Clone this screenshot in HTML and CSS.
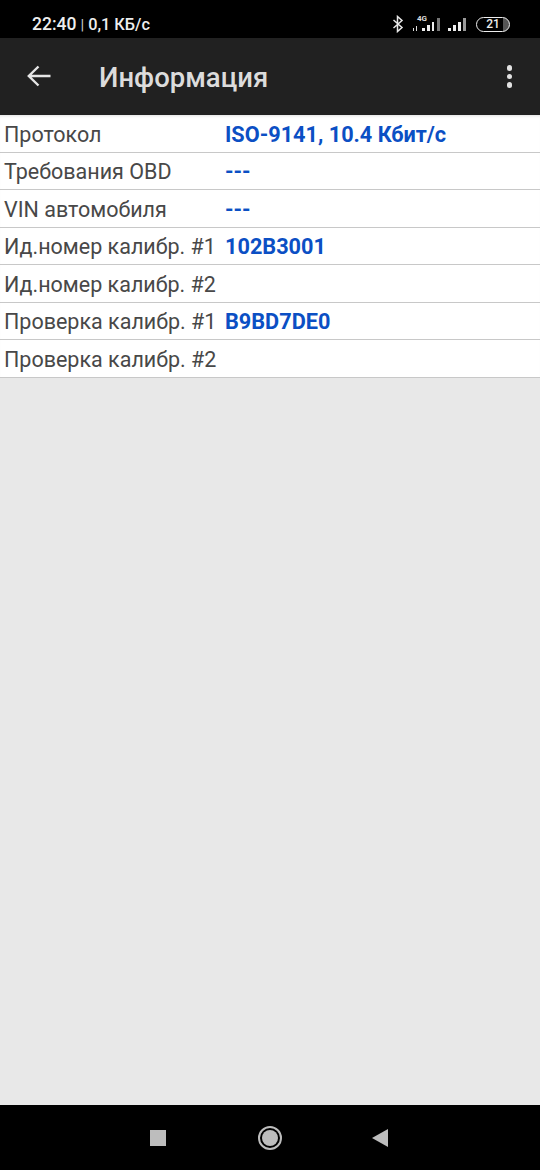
FILE: index.html
```html
<!DOCTYPE html>
<html lang="ru">
<head>
    <meta charset="UTF-8">
    <meta name="viewport" content="width=device-width, initial-scale=1.0">
    <link rel="stylesheet" href="styles.css">
    <title>Информация</title>
</head>
<body>
    <div class="status">
        <span class="clock"><b>22:40</b> <i>|</i> 0,1 КБ/с</span>
        <div class="status-icons">
            <svg class="bt" width="12" height="18" viewBox="0 0 12 18"><path d="M1.5 5 L10 12.5 L5.5 16.5 V1.5 L10 5.5 L1.5 13" fill="none" stroke="#e8e8e8" stroke-width="1.5"/></svg>
            <div class="net">
                <span class="net-4g">4G</span>
                <svg width="28" height="15" viewBox="0 0 28 15">
                    <path d="M0 11h1v3H0zM3 9h1v5H3z" fill="#ddd"/>
                    <path d="M9 11h3v3H9zM14 8h3v6h-3zM19 5h2v9h-2z" fill="#eee"/>
                    <path d="M24 1h3v13h-3z" fill="#777"/>
                </svg>
            </div>
            <svg class="sig" width="21" height="15" viewBox="0 0 21 15">
                <path d="M0 11h3v3H0zM5 8h3v6H5zM10 5h3v9h-3z" fill="#eee"/>
                <path d="M15 1h3v13h-3z" fill="#999"/>
            </svg>
            <div class="batt"><span>21</span></div>
        </div>
    </div>

    <div class="toolbar">
        <svg class="back" width="26" height="24" viewBox="0 0 26 24"><path d="M24.5 12H3M12.5 2.5L2.8 12l9.7 9.5" fill="none" stroke="#e6e6e6" stroke-width="2.4"/></svg>
        <h1>Информация</h1>
        <div class="dots"><span></span><span></span><span></span></div>
    </div>

    <div class="rows">
        <div class="row"><span class="lbl">Протокол</span><span class="val">ISO-9141, 10.4 Кбит/с</span></div>
        <div class="row"><span class="lbl">Требования OBD</span><span class="val">---</span></div>
        <div class="row"><span class="lbl">VIN автомобиля</span><span class="val">---</span></div>
        <div class="row"><span class="lbl">Ид.номер калибр. #1</span><span class="val">102B3001</span></div>
        <div class="row"><span class="lbl">Ид.номер калибр. #2</span><span class="val"></span></div>
        <div class="row"><span class="lbl">Проверка калибр. #1</span><span class="val">B9BD7DE0</span></div>
        <div class="row"><span class="lbl">Проверка калибр. #2</span><span class="val"></span></div>
    </div>

    <div class="navbar">
        <span class="nav-square"></span>
        <span class="nav-home"><span></span></span>
        <svg width="16" height="18" viewBox="0 0 16 18"><path d="M0 9L16 0v18z" fill="#bdbdbd"/></svg>
    </div>
</body>
</html>
```

FILE: styles.css
```css
html, body { margin: 0; padding: 0; }
body { width: 540px; height: 1170px; display: flex; flex-direction: column; background-color: #e8e8e8; font-family: Roboto, "Noto Sans", sans-serif; overflow: hidden; }

.status { height: 38px; flex: none; background-color: #000; color: #eee; display: flex; align-items: center; justify-content: space-between; padding: 10px 30px 0 32px; box-sizing: border-box; }
.clock { font-size: 16.3px; font-weight: 500; }
.clock b { font-size: 17.5px; font-weight: 500; }
.clock i { font-style: normal; font-weight: 400; font-size: 15px; color: #ccc; }
.status-icons { display: flex; align-items: center; gap: 7px; }
.bt { margin-right: 2px; margin-left: -2px; }
.net { position: relative; width: 28px; height: 15px; display: flex; }
.net-4g { position: absolute; left: 4px; top: -3px; font-size: 8px; font-weight: 700; color: #ddd; }
.batt { width: 32px; height: 13px; border: 1.5px solid #eee; border-radius: 8px; display: flex; align-items: center; justify-content: center; font-size: 12px; font-weight: 500; background: linear-gradient(to right, transparent 80%, #555 80%); }

.toolbar { height: 77px; flex: none; background-color: #212121; display: flex; align-items: center; padding: 2px 0 0 26px; box-sizing: border-box; position: relative; }
.toolbar h1 { margin: 0 0 0 47px; font-size: 27.5px; font-weight: 500; color: #dcdcdc; }
.back { margin-top: -4px; }
.dots { position: absolute; right: 28px; top: 27px; display: flex; flex-direction: column; gap: 3px; }
.dots span { width: 5.5px; height: 5.5px; border-radius: 50%; background-color: #e2e2e2; }

.rows { background-color: #fff; box-shadow: inset 0 3px 3px -2px rgba(0, 0, 0, 0.12); }
.row { height: 37.5px; box-sizing: border-box; border-bottom: 1px solid #c8c8c8; display: flex; align-items: center; padding: 2px 0 0 4px; font-size: 21.5px; }
.lbl { width: 221px; flex: none; color: #484848; white-space: nowrap; }
.val { color: #0b4fc4; font-size: 21.7px; font-weight: 700; white-space: nowrap; }

.navbar { margin-top: auto; height: 65px; flex: none; background-color: #000; display: flex; align-items: center; box-sizing: border-box; padding: 0 152px 0 150px; justify-content: space-between; }
.nav-square { width: 16px; height: 16px; background-color: #bdbdbd; }
.nav-home { width: 24px; height: 24px; margin-left: 1px; box-sizing: border-box; border: 2px solid #bdbdbd; border-radius: 50%; display: flex; align-items: center; justify-content: center; }
.nav-home span { width: 16px; height: 16px; border-radius: 50%; background-color: #bdbdbd; }
```
